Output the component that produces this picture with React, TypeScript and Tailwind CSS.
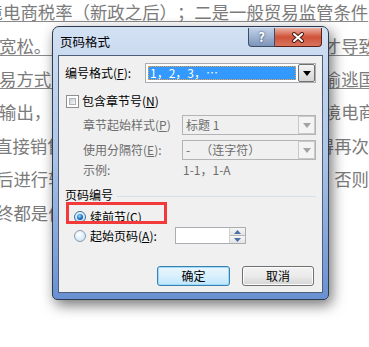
import React from 'react';

// background document lines: [left text, left offset, right text, right offset, underlined]
const docRows: { left: string; ml: string; right: string; mr: string; under: boolean }[] = [
  { left: '宽松。正', ml: 'ml-[-1px]', right: '才导致', mr: 'mr-[-7px]', under: true },
  { left: '易方式运', ml: 'ml-[-1px]', right: '偷逃国', mr: 'mr-[-7px]', under: true },
  { left: '输出，在', ml: 'ml-[-1px]', right: '境电商', mr: 'mr-[-7px]', under: false },
  { left: '直接销售', ml: 'ml-[-5px]', right: '得再次', mr: 'mr-[0px]', under: false },
  { left: '后进行转', ml: 'ml-[-4px]', right: '，否则', mr: 'mr-[0px]', under: false },
  { left: '终都是值', ml: 'ml-[-4px]', right: '', mr: 'mr-[0px]', under: false },
];

const Caret = ({ color }: { color: string }) => (
  <svg width="8" height="5" viewBox="0 0 8 5">
    <path d="M0 0h8L4 5z" fill={color} />
  </svg>
);

const Key = ({ k }: { k: string }) => (
  <>
    (<span className="underline underline-offset-[1px]">{k}</span>)
  </>
);

const DisabledSelect = ({ children }: { children: React.ReactNode }) => (
  <div className="w-[134px] h-[20px] border border-[#b4b4b4] bg-[#f0f0f0] flex items-center justify-between">
    <div className="pl-[3px] text-[#6d6d6d] whitespace-pre flex items-center">{children}</div>
    <div className="w-[17px] h-[18px] border border-[#c9c9c9] flex items-center justify-center bg-[#f4f4f4]">
      <Caret color="#a3a3a3" />
    </div>
  </div>
);

const App: React.FC = () => {
  return (
    <div className="relative w-[369px] h-[347px] overflow-hidden bg-white">
      {/* document behind the dialog */}
      <div className="mt-[-4.7px] font-['Noto_Sans_CJK_SC',sans-serif] text-[17.4px] leading-[33.4px] text-[#7b7b7b] whitespace-nowrap [text-spacing-trim:space-all]">
        <div className="h-[33.4px] ml-[-14.4px]">
          <span className="underline decoration-[#8a8a8a] underline-offset-[2px]">境电商税率（新政之后）；二是一般贸易监管条件</span>
        </div>
        {docRows.map((r, i) => (
          <div key={i} className="h-[33.4px] flex justify-between">
            <span className={`${r.ml} ${r.under ? 'underline decoration-[#8a8a8a] underline-offset-[2px]' : ''}`}>{r.left}</span>
            <span className={`${r.mr} ${r.under ? 'underline decoration-[#8a8a8a] underline-offset-[2px]' : ''}`}>{r.right}</span>
          </div>
        ))}
      </div>

      {/* dialog window */}
      <div className="absolute left-[52px] top-[26px] w-[277px] h-[274px] rounded-t-[7px] rounded-b-[5px] border border-[#2c3b50] bg-gradient-to-b from-[#d3e1f3] via-[#a9c2e6] to-[#6990d2] px-[5px] pb-[6px] flex flex-col shadow-[3px_5px_14px_rgba(0,0,0,0.55)] font-['Noto_Sans_CJK_SC',sans-serif] text-[12px] leading-[14px] text-black">
        <div className="h-[28px] flex justify-between items-start">
          <div className="mt-[8px] ml-[2px] text-[12.5px]">页码格式</div>
          <div className="flex mt-[1px] mr-[1px]">
            <div className="w-[27px] h-[19px] border border-[#3c4d68] border-t-0 rounded-bl-[4px] bg-gradient-to-b from-[#c2d1e8] to-[#7d95bb] flex items-center justify-center text-white font-bold text-[13px] [text-shadow:0_0_2px_#1d2b40]">
              ?
            </div>
            <div className="w-[47px] h-[19px] border border-[#5a1f15] border-t-0 border-l-0 rounded-br-[4px] bg-gradient-to-b from-[#eab0a2] via-[#cf5138] to-[#d7745c] flex items-center justify-center">
              <svg width="14" height="11" viewBox="0 0 14 11">
                <path d="M3 2l8 7M11 2l-8 7" stroke="#4a1a12" strokeWidth="4" strokeLinecap="round" />
                <path d="M3 2l8 7M11 2l-8 7" stroke="#ffffff" strokeWidth="2" strokeLinecap="round" />
              </svg>
            </div>
          </div>
        </div>

        <div className="relative flex-1 border border-[#4d5f78] bg-[#f0f0f0] px-[6px] pt-[7px] flex flex-col">
          {/* number format */}
          <div className="h-[20px] flex items-center justify-between">
            <div>编号格式<Key k="F" />:</div>
            <div className="w-[171px] h-[20px] border border-[#abadb3] bg-white flex items-center">
              <div className="ml-[2px] w-[148px] h-[14px] bg-[#3399ff] border border-dotted border-[#f0a040] text-white text-[12px] leading-[12px] pl-[1px] flex items-center">
                1，2，3，…
              </div>
              <div className="ml-[2px] w-[17px] h-[18px] border border-[#707070] rounded-[2px] bg-gradient-to-b from-[#f4f4f4] to-[#d6d6d6] flex items-center justify-center">
                <Caret color="#000000" />
              </div>
            </div>
          </div>

          {/* include chapter number */}
          <div className="mt-[10px] h-[16px] flex items-center">
            <div className="ml-[1px] w-[13px] h-[13px] border border-[#8e8f8f] bg-white p-[2px]">
              <div className="w-full h-full bg-gradient-to-br from-[#cbcfd5] to-[#f6f6f6] border border-[#aeb3b9]" />
            </div>
            <div className="ml-[3px]">包含章节号<Key k="N" /></div>
          </div>

          <div className="mt-[6px] h-[20px] flex items-center justify-between pl-[18px]">
            <div className="text-[#6d6d6d]">章节起始样式<Key k="P" /></div>
            <DisabledSelect>标题 1</DisabledSelect>
          </div>

          <div className="mt-[5px] h-[20px] flex items-center justify-between pl-[18px]">
            <div className="text-[#6d6d6d]">使用分隔符<Key k="E" />:</div>
            <DisabledSelect>
              <span>-</span>
              <span className="ml-[10px]">（连字符）</span>
            </DisabledSelect>
          </div>

          <div className="mt-[3px] h-[14px] flex items-center pl-[18px] text-[#6d6d6d]">
            <div className="w-[100px]">示例:</div>
            <div>1-1，1-A</div>
          </div>

          {/* page numbering */}
          <div className="mt-[11px] h-[14px] flex items-center">
            <div>页码编号</div>
            <div className="flex-1 ml-[4px] mt-[3px] h-px bg-[#d5dfe5]" />
          </div>

          <div className="mt-[7px] h-[16px] flex items-center pl-[9px]">
            <div className="w-[12px] h-[12px] rounded-full border border-[#3d6f99] bg-gradient-to-b from-[#e6f2fb] to-[#c6dff3] flex items-center justify-center">
              <div className="w-[6px] h-[6px] rounded-full bg-[radial-gradient(circle_at_40%_35%,#8fdcff,#1c6cc0_55%,#0b3667)]" />
            </div>
            <div className="ml-[4px]">续前节<Key k="C" /></div>
          </div>

          <div className="mt-[2px] h-[17px] flex items-center pl-[9px]">
            <div className="w-[12px] h-[12px] rounded-full border border-[#8e9aa9] bg-[radial-gradient(circle_at_40%_35%,#ffffff,#d2e9f8_70%,#b9d9ef)]" />
            <div className="ml-[4px] w-[85px]">起始页码<Key k="A" />:</div>
            <div className="w-[71px] h-[17px] border border-[#abadb3] bg-white flex justify-end">
              <div className="w-[16px] h-full flex flex-col border-l border-[#d0d0d0]">
                <div className="flex-1 flex items-center justify-center bg-gradient-to-b from-[#f6f6f6] to-[#e3e3e3] border-b border-[#b8b8b8]">
                  <svg width="7" height="4" viewBox="0 0 7 4"><path d="M0 4h7L3.5 0z" fill="#4d6fa8" /></svg>
                </div>
                <div className="flex-1 flex items-center justify-center bg-gradient-to-b from-[#f6f6f6] to-[#e3e3e3]">
                  <svg width="7" height="4" viewBox="0 0 7 4"><path d="M0 0h7L3.5 4z" fill="#4d6fa8" /></svg>
                </div>
              </div>
            </div>
          </div>

          {/* buttons */}
          <div className="mt-[22px] flex justify-end gap-[12px] pr-[2px]">
            <button className="w-[73px] h-[20px] rounded-[3px] border border-[#3c7fb1] bg-gradient-to-b from-[#eaf6fd] via-[#d9f0fc] to-[#bee6fd] shadow-[inset_0_0_0_1px_#9ddbf9] text-[12px] leading-[14px]">
              确定
            </button>
            <button className="w-[72px] h-[20px] rounded-[3px] border border-[#707070] bg-gradient-to-b from-[#f2f2f2] via-[#ebebeb] to-[#d4d4d4] shadow-[inset_0_0_0_1px_#fcfcfc] text-[12px] leading-[14px]">
              取消
            </button>
          </div>

          {/* red annotation */}
          <div className="absolute left-[7px] top-[146px] w-[101px] h-[22px] border-[3px] border-[#f23a3a]" />
        </div>
      </div>
    </div>
  );
};

export default App;
